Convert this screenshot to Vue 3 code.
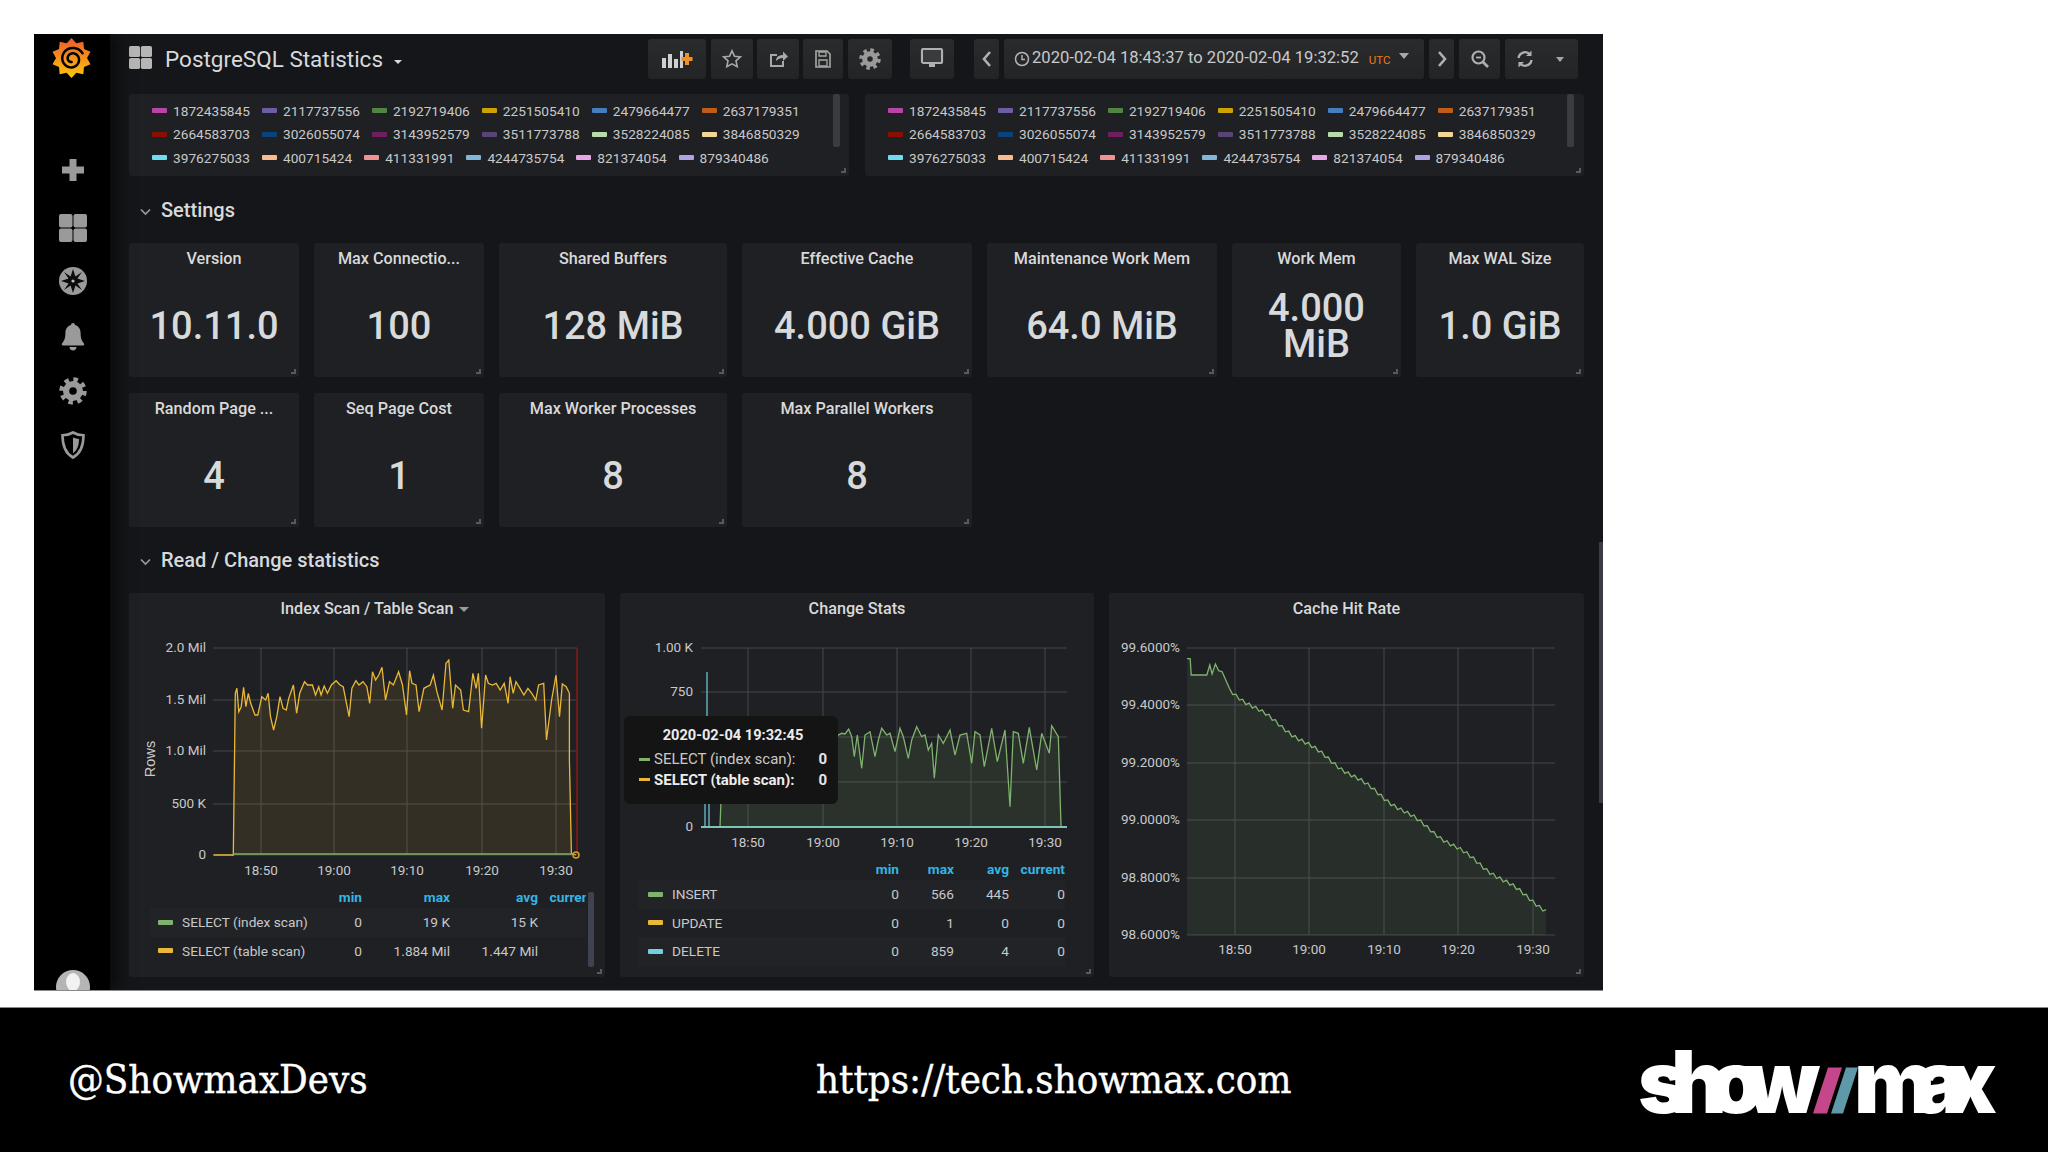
<script setup>
const legendIds = [
  ['1872435845', '#ba43a9'], ['2117737556', '#705da0'], ['2192719406', '#508642'],
  ['2251505410', '#cca300'], ['2479664477', '#447ebc'], ['2637179351', '#c15c17'],
  ['2664583703', '#890f02'], ['3026055074', '#0a437c'], ['3143952579', '#6d1f62'],
  ['3511773788', '#584477'], ['3528224085', '#b7dbab'], ['3846850329', '#f4d598'],
  ['3976275033', '#70dbed'], ['400715424', '#f9ba8f'], ['411331991', '#f29191'],
  ['4244735754', '#82b5d8'], ['821374054', '#e5a8e2'], ['879340486', '#aea2e0'],
]
const legendPanels = [{ id: 'a', bar: 'bar-a' }, { id: 'b', bar: 'bar-b' }]

const stats = [
  ['Version', '10.11.0'], ['Max Connectio...', '100'], ['Shared Buffers', '128 MiB'],
  ['Effective Cache', '4.000 GiB'], ['Maintenance Work Mem', '64.0 MiB'], ['Work Mem', '4.000 MiB'],
  ['Max WAL Size', '1.0 GiB'], ['Random Page ...', '4'], ['Seq Page Cost', '1'],
  ['Max Worker Processes', '8'], ['Max Parallel Workers', '8'],
]

const toStr = (p) => p.map(([x, y]) => `${x.toFixed(1)},${y.toFixed(1)}`).join(' ')

// Panel 1
const y1Raw = [[540,885],[590,885],[595,400],[599,385],[604,455],[610,440],[616,382],[622,440],[628,400],[634,430],[645,465],[652,465],[662,410],[672,420],[678,400],[684,470],[692,510],[700,470],[708,410],[716,445],[724,450],[730,415],[742,375],[750,460],[758,400],[770,365],[778,375],[790,375],[798,405],[806,380],[812,405],[820,378],[828,400],[838,375],[850,362],[860,375],[868,380],[883,470],[890,385],[900,362],[908,375],[918,365],[928,380],[935,430],[942,335],[950,360],[958,345],[966,322],[975,420],[985,365],[995,375],[1008,335],[1018,375],[1028,465],[1036,332],[1042,370],[1052,375],[1060,455],[1072,385],[1080,380],[1088,375],[1096,345],[1105,395],[1118,450],[1128,310],[1135,300],[1145,445],[1152,375],[1165,390],[1172,450],[1185,455],[1196,340],[1204,385],[1210,340],[1218,505],[1228,345],[1235,370],[1245,375],[1255,370],[1265,390],[1275,370],[1285,430],[1290,350],[1298,400],[1305,365],[1315,385],[1325,405],[1335,385],[1345,400],[1355,420],[1362,375],[1375,370],[1382,540],[1395,420],[1406,345],[1415,470],[1422,372],[1432,380],[1440,400],[1440,600],[1445,880],[1457,885]]
const y1 = y1Raw.map(([x, y]) => [x / 2.529, 560 + y / 3])
const y1Line = toStr(y1)
const y1Fill = toStr([...y1, [y1[y1.length - 1][0], 855], [y1[0][0], 855]])

// Panel 2
const g2Raw = [[330,740],[333,660],[345,480],[685,465],[695,460],[705,462],[716,447],[725,470],[733,530],[742,465],[755,565],[765,465],[780,455],[795,530],[805,480],[815,445],[830,465],[840,460],[855,515],[870,445],[880,470],[895,535],[905,480],[920,440],[935,470],[945,465],[955,510],[965,490],[973,595],[985,465],[1000,490],[1020,450],[1035,525],[1050,465],[1070,460],[1085,550],[1095,455],[1110,465],[1123,560],[1145,445],[1162,545],[1185,450],[1200,680],[1210,455],[1225,460],[1240,550],[1258,442],[1280,570],[1295,460],[1318,520],[1325,437],[1345,470],[1353,738]]
const g2 = g2Raw.map(([x, y]) => [610 + x / 3, 580 + y / 3])
const g2Line = toStr(g2)
const g2Fill = toStr([...g2, [g2[g2.length - 1][0], 827], [g2[0][0], 827]])

// Panel 3
const c3Raw = [[262,236],[272,236],[275,285],[322,285],[331,255],[338,282],[348,252],[358,272],[368,275]]
const steps = 96
for (let i = 0; i <= steps; i++) {
  const x = 390 + (i * 955) / steps
  const base = 330 + (i * 660) / steps
  c3Raw.push([x, base + (i % 2 ? 5 : -5) + Math.sin(i / 2.4) * 5])
}
const c3 = c3Raw.map(([x, y]) => [1100 + x / 3.015, 580 + y / 3])
const c3Line = toStr(c3)
const c3Fill = toStr([...c3, [c3[c3.length - 1][0], 935], [c3[0][0], 935]])

const xLabels = ['18:50', '19:00', '19:10', '19:20', '19:30']
const chart1 = {
  v: [261, 334, 407, 482, 556],
  h: [[648, '2.0 Mil'], [700, '1.5 Mil'], [751, '1.0 Mil'], [804, '500 K'], [855, '0']],
}
const chart2 = {
  v: [748, 823, 897, 971, 1045],
  h: [[648, '1.00 K'], [692, '750'], [737, ''], [782, ''], [827, '0']],
}
const chart3 = {
  v: [1235, 1309, 1384, 1458, 1533],
  h: [[648, '99.6000%'], [705, '99.4000%'], [763, '99.2000%'], [820, '99.0000%'], [878, '98.8000%'], [935, '98.6000%']],
}

const legend1 = [
  ['SELECT (index scan)', '#7eb26d', '0', '19 K', '15 K', '0'],
  ['SELECT (table scan)', '#eab839', '0', '1.884 Mil', '1.447 Mil', '0'],
]
const legend2 = [
  ['INSERT', '#7eb26d', '0', '566', '445', '0'],
  ['UPDATE', '#eab839', '0', '1', '0', '0'],
  ['DELETE', '#6ed0e0', '0', '859', '4', '0'],
]

// Grafana logo outline and spiral
const star = []
for (let i = 0; i < 20; i++) {
  const a = (i * Math.PI) / 10 - Math.PI / 2
  const r = i % 2 ? 15.5 : 20
  star.push([19.5 + r * Math.cos(a), 20 + r * Math.sin(a)])
}
const starPts = toStr(star)
let spiral = ''
for (let i = 0; i <= 60; i++) {
  const t = i / 60
  const a = -0.5 - t * Math.PI * 3.3
  const r = 12 - t * 9
  spiral += `${i ? 'L' : 'M'}${(20 + r * Math.cos(a)).toFixed(2)} ${(21 + r * Math.sin(a)).toFixed(2)} `
}
</script>

<template>
  <div class="page">
    <div class="frame">
      <aside class="sidebar">
        <svg class="logo" width="40" height="40" viewBox="0 0 40 40">
          <defs>
            <linearGradient id="gf" x1="0" y1="0" x2="0" y2="1">
              <stop offset="0" stop-color="#ee5a2a" />
              <stop offset="1" stop-color="#fcc80c" />
            </linearGradient>
          </defs>
          <polygon :points="starPts" fill="url(#gf)" />
          <path :d="spiral" fill="none" stroke="#000" stroke-width="2.500" stroke-linecap="round" />
        </svg>
        <svg class="side-icon plus" width="22" height="22" viewBox="0 0 22 22">
          <path d="M11 1v20M1 11h20" stroke="#9a9a9a" stroke-width="7" stroke-linecap="round" />
        </svg>
        <svg class="side-icon dash" width="28" height="28" viewBox="0 0 28 28" fill="#9a9a9a">
          <rect width="13.5" height="13.5" rx="2" />
          <rect x="14.5" width="13.5" height="13.5" rx="2" />
          <rect y="14.5" width="13.5" height="13.5" rx="2" />
          <rect x="14.5" y="14.5" width="13.5" height="13.5" rx="2" />
        </svg>
        <svg class="side-icon comp" width="28" height="28" viewBox="0 0 28 28">
          <circle cx="14" cy="14" r="14" fill="#9a9a9a" />
          <path d="M14 2l2.4 7.6L23 5l-4.6 6.6L26 14l-7.6 2.4L23 23l-6.6-4.6L14 26l-2.4-7.6L5 23l4.6-6.6L2 14l7.6-2.4L5 5l6.6 4.6z" fill="#0b0b0b" />
          <circle cx="14" cy="14" r="1.6" fill="#bbb" />
        </svg>
        <svg class="side-icon bell" width="24" height="28" viewBox="0 0 24 28" fill="#9a9a9a">
          <path d="M12 0c1.2 0 2 .8 2 2 3.6 1 5.6 4 5.6 8 0 5 1 7.5 3.4 10.500.6.8.2 2-1 2H2c-1.200 0-1.600-1.200-1-2C3.400 17.500 4.400 15 4.400 10c0-4 2-7 5.600-8 0-1.200.8-2 2-2z" />
          <path d="M8.500 24h7c0 2-1.500 3.500-3.500 3.500S8.500 26 8.500 24z" />
        </svg>
        <svg class="side-icon gear" width="28" height="28" viewBox="0 0 28 28">
          <circle cx="14" cy="14" r="11.200" fill="none" stroke="#9a9a9a" stroke-width="5" stroke-dasharray="4.400 4.400" />
          <circle cx="14" cy="14" r="10" fill="#9a9a9a" />
          <circle cx="14" cy="14" r="3.800" fill="#000" />
        </svg>
        <svg class="side-icon shield" width="24" height="28" viewBox="0 0 24 28">
          <path d="M12 1.500c3.500 2 7 2.800 10.500 2.800C22.500 14 19.500 22.500 12 26.500 4.500 22.500 1.500 14 1.500 4.300 5 4.300 8.500 3.500 12 1.500z" fill="none" stroke="#9a9a9a" stroke-width="2.600" />
          <path d="M12 6.500c2 .9 4 1.400 6 1.600 0 6.500-2 11.500-6 14.200z" fill="#9a9a9a" />
        </svg>
        <div class="avatar"><span class="avatar-head"></span></div>
      </aside>

      <main class="main">
        <header class="topbar">
          <svg class="title-icon" width="23" height="23" viewBox="0 0 28 28" fill="#b6b6b6">
            <rect width="13.500" height="13.500" rx="2" />
            <rect x="14.500" width="13.500" height="13.500" rx="2" />
            <rect y="14.500" width="13.500" height="13.500" rx="2" />
            <rect x="14.500" y="14.500" width="13.500" height="13.500" rx="2" />
          </svg>
          <h1 class="title">PostgreSQL Statistics</h1>
          <span class="title-caret"></span>

          <div class="btn b-add">
            <svg width="32" height="18" viewBox="0 0 32 18">
              <path d="M1 8h4v10H1zM7 4h4v14H7zM13 9h4v9h-4zM19 1h3v17h-3z" fill="#d0d0d0" />
              <path d="M26 3v12M20.500 9h11" stroke="#f0902a" stroke-width="4" />
            </svg>
          </div>
          <div class="btn b-star">
            <svg width="20" height="20" viewBox="0 0 20 20"><path d="M10 1.800l2.500 5.400 5.900.7-4.400 4 1.200 5.800-5.200-2.900-5.200 2.900 1.200-5.800-4.400-4 5.900-.7z" fill="none" stroke="#a8a8a8" stroke-width="1.600" /></svg>
          </div>
          <div class="btn b-share">
            <svg width="20" height="20" viewBox="0 0 20 20"><path d="M15 12v5H3V6h6" fill="none" stroke="#a8a8a8" stroke-width="2" /><path d="M8 12c0-4 3-6 7-6V2.500l5 5-5 4.500V9c-3 0-5 1-7 3z" fill="#a8a8a8" /></svg>
          </div>
          <div class="btn b-save">
            <svg width="18" height="20" viewBox="0 0 18 20"><path d="M2 2h11l3 3v13H2z" fill="none" stroke="#a8a8a8" stroke-width="1.600" /><path d="M5 3h7v4H5zM5 11h8v6H5z" fill="none" stroke="#a8a8a8" stroke-width="1.300" /></svg>
          </div>
          <div class="btn b-gear">
            <svg width="22" height="22" viewBox="0 0 28 28">
              <circle cx="14" cy="14" r="11.200" fill="none" stroke="#9a9a9a" stroke-width="5" stroke-dasharray="4.400 4.400" />
              <circle cx="14" cy="14" r="10" fill="#9a9a9a" />
              <circle cx="14" cy="14" r="3.500" fill="#262729" />
            </svg>
          </div>
          <div class="btn b-mon">
            <svg width="24" height="22" viewBox="0 0 24 22"><rect x="2" y="1" width="20" height="14" rx="1.500" fill="none" stroke="#b0b0b0" stroke-width="2.200" /><rect x="3" y="2" width="18" height="12" fill="#3a3b3d" /><path d="M9 16h6v3H9z" fill="#b0b0b0" /></svg>
          </div>
          <div class="btn b-prev">
            <svg width="12" height="20" viewBox="0 0 12 20"><path d="M9 3L3 10l6 7" fill="none" stroke="#b0b0b0" stroke-width="2.600" /></svg>
          </div>
          <div class="btn b-range">
            <svg class="clock" width="16" height="16" viewBox="0 0 16 16"><circle cx="8" cy="8" r="6.500" fill="none" stroke="#b5b5b5" stroke-width="1.500" /><path d="M8 4v4.500h3" fill="none" stroke="#b5b5b5" stroke-width="1.400" /></svg>
            <span class="range-text">2020-02-04 18:43:37 to 2020-02-04 19:32:52</span>
            <span class="utc">UTC</span>
            <span class="range-caret"></span>
          </div>
          <div class="btn b-next">
            <svg width="12" height="20" viewBox="0 0 12 20"><path d="M3 3l6 7-6 7" fill="none" stroke="#b0b0b0" stroke-width="2.600" /></svg>
          </div>
          <div class="btn b-zoom">
            <svg width="20" height="20" viewBox="0 0 20 20"><circle cx="8.500" cy="8.500" r="6" fill="none" stroke="#b0b0b0" stroke-width="2.200" /><path d="M13 13l5 5" stroke="#b0b0b0" stroke-width="2.600" /><path d="M6 8.500h5" stroke="#b0b0b0" stroke-width="1.800" /></svg>
          </div>
          <div class="btn b-refresh">
            <svg width="20" height="20" viewBox="0 0 20 20"><path d="M3.500 9a6.600 6.600 0 0 1 11.500-3.500M16.500 11A6.600 6.600 0 0 1 5 14.500" fill="none" stroke="#b0b0b0" stroke-width="2.300" /><path d="M16.500 1.500v5.500h-5.500zM3.500 18.500V13h5.500z" fill="#b0b0b0" /></svg>
            <span class="refresh-caret"></span>
          </div>
        </header>

        <div class="content">
          <div class="legend-row">
            <section v-for="lp in legendPanels" :key="lp.id" class="panel legend-panel">
              <div class="legend-items">
                <div v-for="item in legendIds" :key="item[0]" class="legend-item">
                  <i class="swatch" :style="{ background: item[1] }"></i>{{ item[0] }}
                </div>
              </div>
              <div class="legend-scroll" :class="lp.bar"></div>
            </section>
          </div>

          <div class="section">
            <svg width="11" height="8" viewBox="0 0 11 8"><path d="M1 1.500l4.500 4.500L10 1.500" fill="none" stroke="#9a9a9a" stroke-width="1.700" /></svg>
            <span>Settings</span>
          </div>

          <div class="stats">
            <section v-for="s in stats" :key="s[0]" class="panel stat">
              <div class="stat-title">{{ s[0] }}</div>
              <div class="stat-value">{{ s[1] }}</div>
            </section>
          </div>

          <div class="section section-tight">
            <svg width="11" height="8" viewBox="0 0 11 8"><path d="M1 1.500l4.500 4.500L10 1.500" fill="none" stroke="#9a9a9a" stroke-width="1.700" /></svg>
            <span>Read / Change statistics</span>
          </div>

          <div class="graphs">
            <section class="panel graph">
              <div class="graph-title">Index Scan / Table Scan<i class="graph-caret"></i></div>
              <svg class="chart c1" viewBox="129 625 476 260">
                <line v-for="v in chart1.v" :key="v" :x1="v" :x2="v" y1="648" y2="855" class="grid" />
                <line v-for="h in chart1.h" :key="h[0]" x1="213" x2="577" :y1="h[0]" :y2="h[0]" class="grid" />
                <polygon :points="y1Fill" fill="#eab839" fill-opacity=".1" />
                <line x1="577" x2="577" y1="648" y2="855" stroke="#8a1a14" stroke-width="1.500" />
                <polyline :points="y1Line" fill="none" stroke="#eab839" stroke-width="1.300" />
                <line x1="233" x2="573" y1="854" y2="854" stroke="#7eb26d" stroke-width="1.500" />
                <circle cx="576" cy="855" r="3" fill="none" stroke="#c8a02c" stroke-width="1.500" />
                <text v-for="h in chart1.h" :key="h[1]" x="206" :y="h[0] + 4" text-anchor="end" class="tick">{{ h[1] }}</text>
                <text v-for="(t, i) in xLabels" :key="t" :x="chart1.v[i]" y="875" text-anchor="middle" class="tick">{{ t }}</text>
                <text transform="translate(155 759) rotate(-90)" text-anchor="middle" class="axis">Rows</text>
              </svg>
              <div class="table t1">
                <div class="t-row t-head"><span class="t-name"></span><span class="c-min">min</span><span class="c-max">max</span><span class="c-avg">avg</span><span class="c-cur">current</span></div>
                <div v-for="(r, ri) in legend1" :key="r[0]" class="t-row" :class="{ odd: ri === 0 }">
                  <span class="t-name"><i class="t-swatch" :style="{ background: r[1] }"></i>{{ r[0] }}</span>
                  <span class="c-min">{{ r[2] }}</span><span class="c-max">{{ r[3] }}</span><span class="c-avg">{{ r[4] }}</span><span class="c-cur">{{ r[5] }}</span>
                </div>
              </div>
              <div class="t-scroll"></div>
            </section>

            <section class="panel graph">
              <div class="graph-title">Change Stats</div>
              <svg class="chart c2" viewBox="620 625 474 232">
                <line v-for="v in chart2.v" :key="v" :x1="v" :x2="v" y1="648" y2="827" class="grid" />
                <line v-for="h in chart2.h" :key="h[0]" x1="701" x2="1067" :y1="h[0]" :y2="h[0]" class="grid" />
                <polygon :points="g2Fill" fill="#7eb26d" fill-opacity=".12" />
                <path d="M707 672V716M705 804V827M709 804V827" fill="none" stroke="#6ed0e0" stroke-width="1.200" />
                <polyline :points="g2Line" fill="none" stroke="#7eb26d" stroke-width="1.300" />
                <line x1="701" x2="1067" y1="827" y2="827" stroke="#7fc4b0" stroke-width="2" />
                <text v-for="h in chart2.h" :key="h[0] + 't'" x="693" :y="h[0] + 4" text-anchor="end" class="tick">{{ h[1] }}</text>
                <text v-for="(t, i) in xLabels" :key="t" :x="chart2.v[i]" y="847" text-anchor="middle" class="tick">{{ t }}</text>
              </svg>
              <div class="table t2">
                <div class="t-row t-head"><span class="t-name"></span><span class="c-min">min</span><span class="c-max">max</span><span class="c-avg">avg</span><span class="c-cur">current</span></div>
                <div v-for="(r, ri) in legend2" :key="r[0]" class="t-row" :class="{ odd: ri !== 1 }">
                  <span class="t-name"><i class="t-swatch" :style="{ background: r[1] }"></i>{{ r[0] }}</span>
                  <span class="c-min">{{ r[2] }}</span><span class="c-max">{{ r[3] }}</span><span class="c-avg">{{ r[4] }}</span><span class="c-cur">{{ r[5] }}</span>
                </div>
              </div>
              <div class="tooltip">
                <div class="tt-title">2020-02-04 19:32:45</div>
                <div class="tt-row"><i class="tt-sw tt-green"></i><span class="tt-name">SELECT (index scan):</span><b>0</b></div>
                <div class="tt-row tt-bold"><i class="tt-sw tt-yellow"></i><span class="tt-name">SELECT (table scan):</span><b>0</b></div>
              </div>
            </section>

            <section class="panel graph">
              <div class="graph-title">Cache Hit Rate</div>
              <svg class="chart c3" viewBox="1109 625 475 352">
                <line v-for="v in chart3.v" :key="v" :x1="v" :x2="v" y1="648" y2="935" class="grid" />
                <line v-for="h in chart3.h" :key="h[0]" x1="1187" x2="1555" :y1="h[0]" :y2="h[0]" class="grid" />
                <polygon :points="c3Fill" fill="#7eb26d" fill-opacity=".1" />
                <polyline :points="c3Line" fill="none" stroke="#7eb26d" stroke-width="1.300" />
                <text v-for="h in chart3.h" :key="h[1]" x="1180" :y="h[0] + 4" text-anchor="end" class="tick">{{ h[1] }}</text>
                <text v-for="(t, i) in xLabels" :key="t" :x="chart3.v[i]" y="954" text-anchor="middle" class="tick">{{ t }}</text>
              </svg>
            </section>
          </div>
        </div>
        <div class="page-scroll"></div>
      </main>
    </div>

    <footer class="footer">
      <span class="foot-text">@ShowmaxDevs</span>
      <span class="foot-text">https://tech.showmax.com</span>
      <svg class="brand" width="362" height="70" viewBox="0 0 362 70">
        <text x="0" y="67.500" class="brand-text" textLength="182" lengthAdjust="spacing">show</text>
        <polygon points="190,22.500 204,22.500 189,68.500 175,68.500" fill="#c4478c" />
        <polygon points="208,22.500 220,22.500 205,68.500 193,68.500" fill="#5f98a8" />
        <text x="216" y="67.500" class="brand-text" textLength="143" lengthAdjust="spacing">max</text>
      </svg>
    </footer>
  </div>
</template>

<style scoped>
.page {
  width: 2048px;
  height: 1152px;
  background: #fff;
  overflow: hidden;
  padding-top: 34px;
  box-sizing: border-box;
  display: flex;
  flex-direction: column;
  font-family: Roboto, "Liberation Sans", sans-serif;
}
.frame {
  width: 1569px;
  height: 957px;
  margin-left: 34px;
  display: flex;
  background: #141619;
  border-bottom: 1px solid #8a8a8a;
  box-sizing: border-box;
  overflow: hidden;
}
.sidebar {
  width: 76px;
  flex: none;
  box-sizing: border-box;
  padding-left: 2px;
  background: #000;
  display: flex;
  flex-direction: column;
  align-items: center;
  box-shadow: 8px 0 14px rgba(0, 0, 0, .5);
  position: relative;
  z-index: 1;
}
.logo { margin: 4px 0 0 -3px; }
.side-icon { flex: none; }
.plus { margin-top: 81px; }
.dash { margin-top: 33px; }
.comp { margin-top: 25px; }
.bell { margin-top: 28px; }
.gear { margin-top: 26px; }
.shield { margin-top: 26px; }
.avatar {
  margin-top: auto;
  margin-bottom: -14px;
  width: 34px;
  height: 34px;
  flex: none;
  border-radius: 50%;
  background: #b5b5b5;
  overflow: hidden;
  display: flex;
  justify-content: center;
}
.avatar-head {
  width: 14px;
  height: 18px;
  margin-top: 3px;
  border-radius: 50%;
  background: #f2f2f2;
}
.main {
  flex: 1;
  min-width: 0;
  padding: 0 19px;
  position: relative;
  display: flex;
  flex-direction: column;
}
.topbar {
  height: 60px;
  flex: none;
  padding: 5px 6px 0 0;
  box-sizing: border-box;
  display: flex;
  align-items: flex-start;
  gap: 4px;
}
.title-icon { margin-top: 7px; flex: none; }
.title {
  margin: 5px 0 0 9px;
  font-size: 22.500px;
  line-height: 30px;
  font-weight: 400;
  color: #d8d9da;
}
.title-caret {
  margin: 21px auto 0 7px;
  border: 4px solid transparent;
  border-top-color: #d8d9da;
  border-bottom-width: 0;
}
.btn {
  height: 40px;
  flex: none;
  border-radius: 3px;
  background: linear-gradient(#2a2b2d, #232426);
  display: flex;
  align-items: center;
  justify-content: center;
}
.b-add { width: 58px; margin-right: 1px; }
.b-star { width: 42px; }
.b-share { width: 42px; }
.b-save { width: 40px; margin-right: 1px; }
.b-gear { width: 44px; }
.b-mon { width: 44px; margin-left: 14px; }
.b-prev { width: 25px; margin-left: 16px; }
.b-range {
  width: 420px;
  margin-left: 1px;
  justify-content: flex-start;
  align-items: flex-start;
  padding: 10px 0 0 10px;
  box-sizing: border-box;
  color: #c8c9ca;
}
.clock { margin-top: 2px; flex: none; }
.range-text { margin-left: 2px; margin-top: -1px; font-size: 16.600px; line-height: 20px; white-space: nowrap; }
.utc { margin-left: 10px; margin-top: 2px; font-size: 11.500px; line-height: 18px; color: #eb7b18; }
.range-caret {
  margin: 4px 0 0 9px;
  border: 5px solid transparent;
  border-top: 6px solid #a8a8a8;
  border-bottom-width: 0;
}
.b-next { width: 25px; margin-left: 1px; }
.b-zoom { width: 41px; margin-left: 1px; }
.b-refresh { width: 73px; margin-left: 1px; justify-content: flex-start; padding-left: 10px; box-sizing: border-box; }
.refresh-caret {
  margin-left: 21px;
  border: 4px solid transparent;
  border-top: 5px solid #a8a8a8;
  border-bottom-width: 0;
}
.content { flex: none; }
.panel {
  background: #1f2023;
  border-radius: 3px;
  position: relative;
}
.panel::after {
  content: "";
  position: absolute;
  right: 3px;
  bottom: 3px;
  width: 5px;
  height: 5px;
  border-right: 2px solid #5a5a5c;
  border-bottom: 2px solid #5a5a5c;
  box-sizing: border-box;
}
.legend-row {
  display: grid;
  grid-template-columns: 720px 719px;
  column-gap: 16px;
}
.legend-panel { height: 82px; }
.legend-items {
  padding: 5px 0 0 23px;
  width: 700px;
  display: flex;
  flex-wrap: wrap;
  box-sizing: border-box;
}
.legend-item {
  display: flex;
  align-items: center;
  height: 23.500px;
  font-size: 13.700px;
  color: #c8c9ca;
  margin-right: 12px;
  white-space: nowrap;
}
.swatch {
  width: 15px;
  height: 5px;
  border-radius: 1px;
  margin-right: 6px;
  flex: none;
}
.legend-scroll {
  position: absolute;
  top: 0;
  width: 7px;
  height: 53px;
  background: #3b3c42;
  border-radius: 2px;
}
.bar-a { left: 704px; }
.bar-b { left: 702px; }
.section {
  height: 67px;
  display: flex;
  align-items: center;
  padding-left: 11px;
  color: #d8d9da;
  font-size: 20px;
  font-weight: 500;
}
.section-tight { height: 66px; }
.section span { margin-left: 10px; }
.section svg { margin-top: 4px; }
.stats {
  display: grid;
  grid-template-columns: 170px 170px 228px 230px 230px 169px 168px;
  grid-auto-rows: 134px;
  gap: 16px 15px;
}
.stat { display: flex; flex-direction: column; align-items: center; }
.stat-title {
  height: 32px;
  flex: none;
  line-height: 32px;
  font-size: 16.200px;
  font-weight: 500;
  color: #d8d9da;
  white-space: nowrap;
}
.stat-value {
  flex: 1;
  display: flex;
  align-items: center;
  text-align: center;
  font-size: 38px;
  line-height: 36px;
  font-weight: 500;
  color: #d8d9da;
}
.graphs {
  display: grid;
  grid-template-columns: 476px 474px 475px;
  column-gap: 15px;
  height: 384px;
}
.graph { display: flex; flex-direction: column; overflow: hidden; }
.graph-title {
  height: 32px;
  flex: none;
  line-height: 32px;
  text-align: center;
  font-size: 16.200px;
  font-weight: 500;
  color: #d8d9da;
}
.graph-caret {
  display: inline-block;
  vertical-align: middle;
  margin: 0 -16px 0 6px;
  border: 5px solid transparent;
  border-top: 5px solid #9a9a9a;
  border-bottom-width: 0;
}
.chart { display: block; flex: none; width: 100%; }
.c1 { height: 260px; }
.c2 { height: 232px; }
.c3 { height: 352px; }
.grid { stroke: #45464a; stroke-width: 1; }
.tick {
  font-family: Roboto, "Liberation Sans", sans-serif;
  font-size: 13.500px;
  fill: #c8c9ca;
}
.axis {
  font-family: "Liberation Sans", Arial, sans-serif;
  font-size: 14.500px;
  fill: #c8c9ca;
}
.table {
  font-size: 13.700px;
  color: #c8c9ca;
  overflow: hidden;
}
.t1 { margin-left: 21px; width: 436px; }
.t2 { margin-left: 18px; width: 427px; }
.t-row {
  display: flex;
  height: 28.500px;
  align-items: center;
  white-space: nowrap;
}
.t-row.odd { background: #222327; }
.t-head { height: 23px; color: #33b5e5; font-weight: 700; }
.t-name { flex: none; display: flex; align-items: center; }
.t-swatch {
  width: 15px;
  height: 5px;
  margin-right: 9px;
  border-radius: 1px;
  flex: none;
}
.t-row > span:not(.t-name) { flex: none; text-align: right; }
.t1 .t-name { width: 173px; padding-left: 8px; box-sizing: border-box; }
.t1 .c-min { width: 39px; }
.t1 .c-max { width: 88px; }
.t1 .c-avg { width: 88px; }
.t1 .c-cur { width: 56px; }
.t1 .t-row { width: 486px; }
.t2 .t-name { width: 223px; padding-left: 10px; box-sizing: border-box; }
.t2 .c-min { width: 38px; }
.t2 .c-max { width: 55px; }
.t2 .c-avg { width: 55px; }
.t2 .c-cur { width: 56px; }
.t-scroll {
  position: absolute;
  left: 459px;
  top: 299px;
  width: 6px;
  height: 75px;
  background: #3f4250;
  border-radius: 2px;
}
.tooltip {
  position: absolute;
  left: 4px;
  top: 123px;
  width: 214px;
  height: 88px;
  box-sizing: border-box;
  padding: 9px 11px 0 15px;
  background: #141414;
  border-radius: 6px;
  color: #c8c9ca;
  font-size: 15px;
}
.tt-title { text-align: center; font-weight: 700; color: #ececec; line-height: 20px; margin-bottom: 4px; font-size: 14.600px; }
.tt-row { display: flex; align-items: center; height: 20.500px; }
.tt-row b { margin-left: auto; color: #e6e6e6; font-weight: 700; }
.tt-bold .tt-name { font-weight: 700; color: #ececec; }
.tt-sw { width: 11px; height: 3px; margin-right: 4px; flex: none; }
.tt-green { background: #7eb26d; }
.tt-yellow { background: #eab839; }
.page-scroll {
  position: absolute;
  right: 0;
  top: 508px;
  width: 4px;
  height: 261px;
  background: #3a3b44;
}
.footer {
  margin-top: auto;
  height: 145px;
  flex: none;
  background: #000;
  border-top: 1px solid #8a8a8a;
  box-sizing: border-box;
  display: grid;
  grid-template-columns: 748px 822px 1fr;
  padding: 0 0 3px 68px;
  align-items: center;
}
.foot-text {
  font-family: "DejaVu Serif Condensed", "DejaVu Serif", serif;
  font-size: 39.800px;
  font-weight: 400;
  -webkit-text-stroke: .4px #fff;
  color: #fff;
  white-space: nowrap;
}
.brand { display: block; margin-top: 3px; overflow: visible; }
.brand-text {
  font-family: Inter, Roboto, sans-serif;
  font-weight: 900;
  font-size: 86px;
  fill: #fff;
}
</style>
